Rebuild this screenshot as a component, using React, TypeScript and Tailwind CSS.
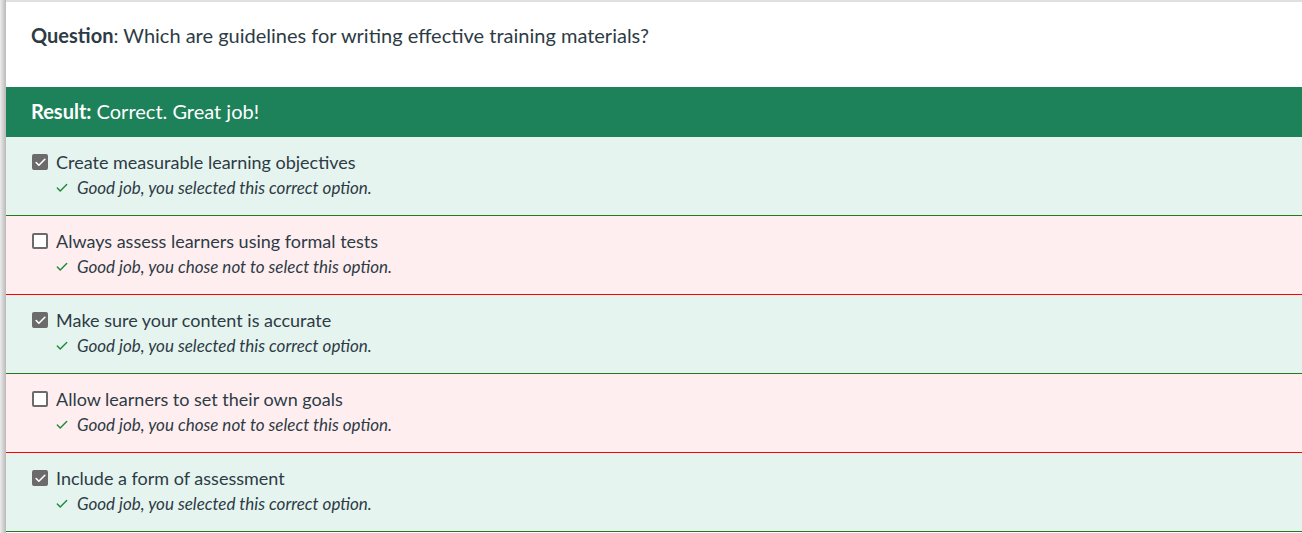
import { Check } from 'lucide-react';

type Option = {
  label: string;
  selected: boolean;
  correct: boolean;
  feedback: string;
};

const options: Option[] = [
  { label: 'Create measurable learning objectives', selected: true, correct: true, feedback: 'Good job, you selected this correct option.' },
  { label: 'Always assess learners using formal tests', selected: false, correct: false, feedback: 'Good job, you chose not to select this option.' },
  { label: 'Make sure your content is accurate', selected: true, correct: true, feedback: 'Good job, you selected this correct option.' },
  { label: 'Allow learners to set their own goals', selected: false, correct: false, feedback: 'Good job, you chose not to select this option.' },
  { label: 'Include a form of assessment', selected: true, correct: true, feedback: 'Good job, you selected this correct option.' },
];

function Checkbox({ checked }: { checked: boolean }) {
  if (checked) {
    return (
      <span className="flex h-[16px] w-[16px] shrink-0 items-center justify-center rounded-[2px] bg-[#6b6b6b]">
        <Check className="h-[13px] w-[13px] text-white" strokeWidth={3} />
      </span>
    );
  }
  return <span className="h-[16px] w-[16px] shrink-0 rounded-[2px] border-2 border-[#6b6b6b] bg-white" />;
}

function OptionRow({ option }: { option: Option }) {
  const tone = option.correct
    ? 'bg-[#e6f4ef] border-[#22791f]'
    : 'bg-[#ffeef0] border-[#ff0000]';
  return (
    <div className={`h-[79px] border-b pl-[26px] pt-[14px] ${tone}`}>
      <div className="flex items-center gap-[8px]">
        <Checkbox checked={option.selected} />
        <span className="text-[18px] leading-[22px] text-[#2d3b45]">{option.label}</span>
      </div>
      <div className="mt-[4px] flex items-center gap-[8px] pl-[23px]">
        <Check className="h-[14px] w-[14px] text-[#1f8a3c]" strokeWidth={2.5} />
        <span className="text-[17px] italic leading-[22px] text-[#2d3b45]">{option.feedback}</span>
      </div>
    </div>
  );
}

export default function App() {
  return (
    <div
      className="flex h-[533px] w-[1302px] overflow-hidden bg-white"
      style={{ fontFamily: 'Lato, "Noto Sans", sans-serif' }}
    >
      <div className="w-[6px] shrink-0 bg-gradient-to-r from-[#ececec] to-[#b9b9b9]" />
      <main className="flex-1 border-t-2 border-[#e0e0e0]">
        <section className="h-[85px] pl-[25px] pt-[21px]">
          <p className="text-[20px] leading-[24px] text-[#2d3b45]">
            <span className="font-bold">Question</span>: Which are guidelines for writing effective training materials?
          </p>
        </section>
        <div className="flex h-[50px] items-center bg-[#1d8159] pb-[3px] pl-[25px]">
          <p className="text-[20px] leading-[24px] text-white">
            <span className="font-bold">Result:</span> Correct. Great job!
          </p>
        </div>
        {options.map((o) => (
          <OptionRow key={o.label} option={o} />
        ))}
      </main>
    </div>
  );
}
